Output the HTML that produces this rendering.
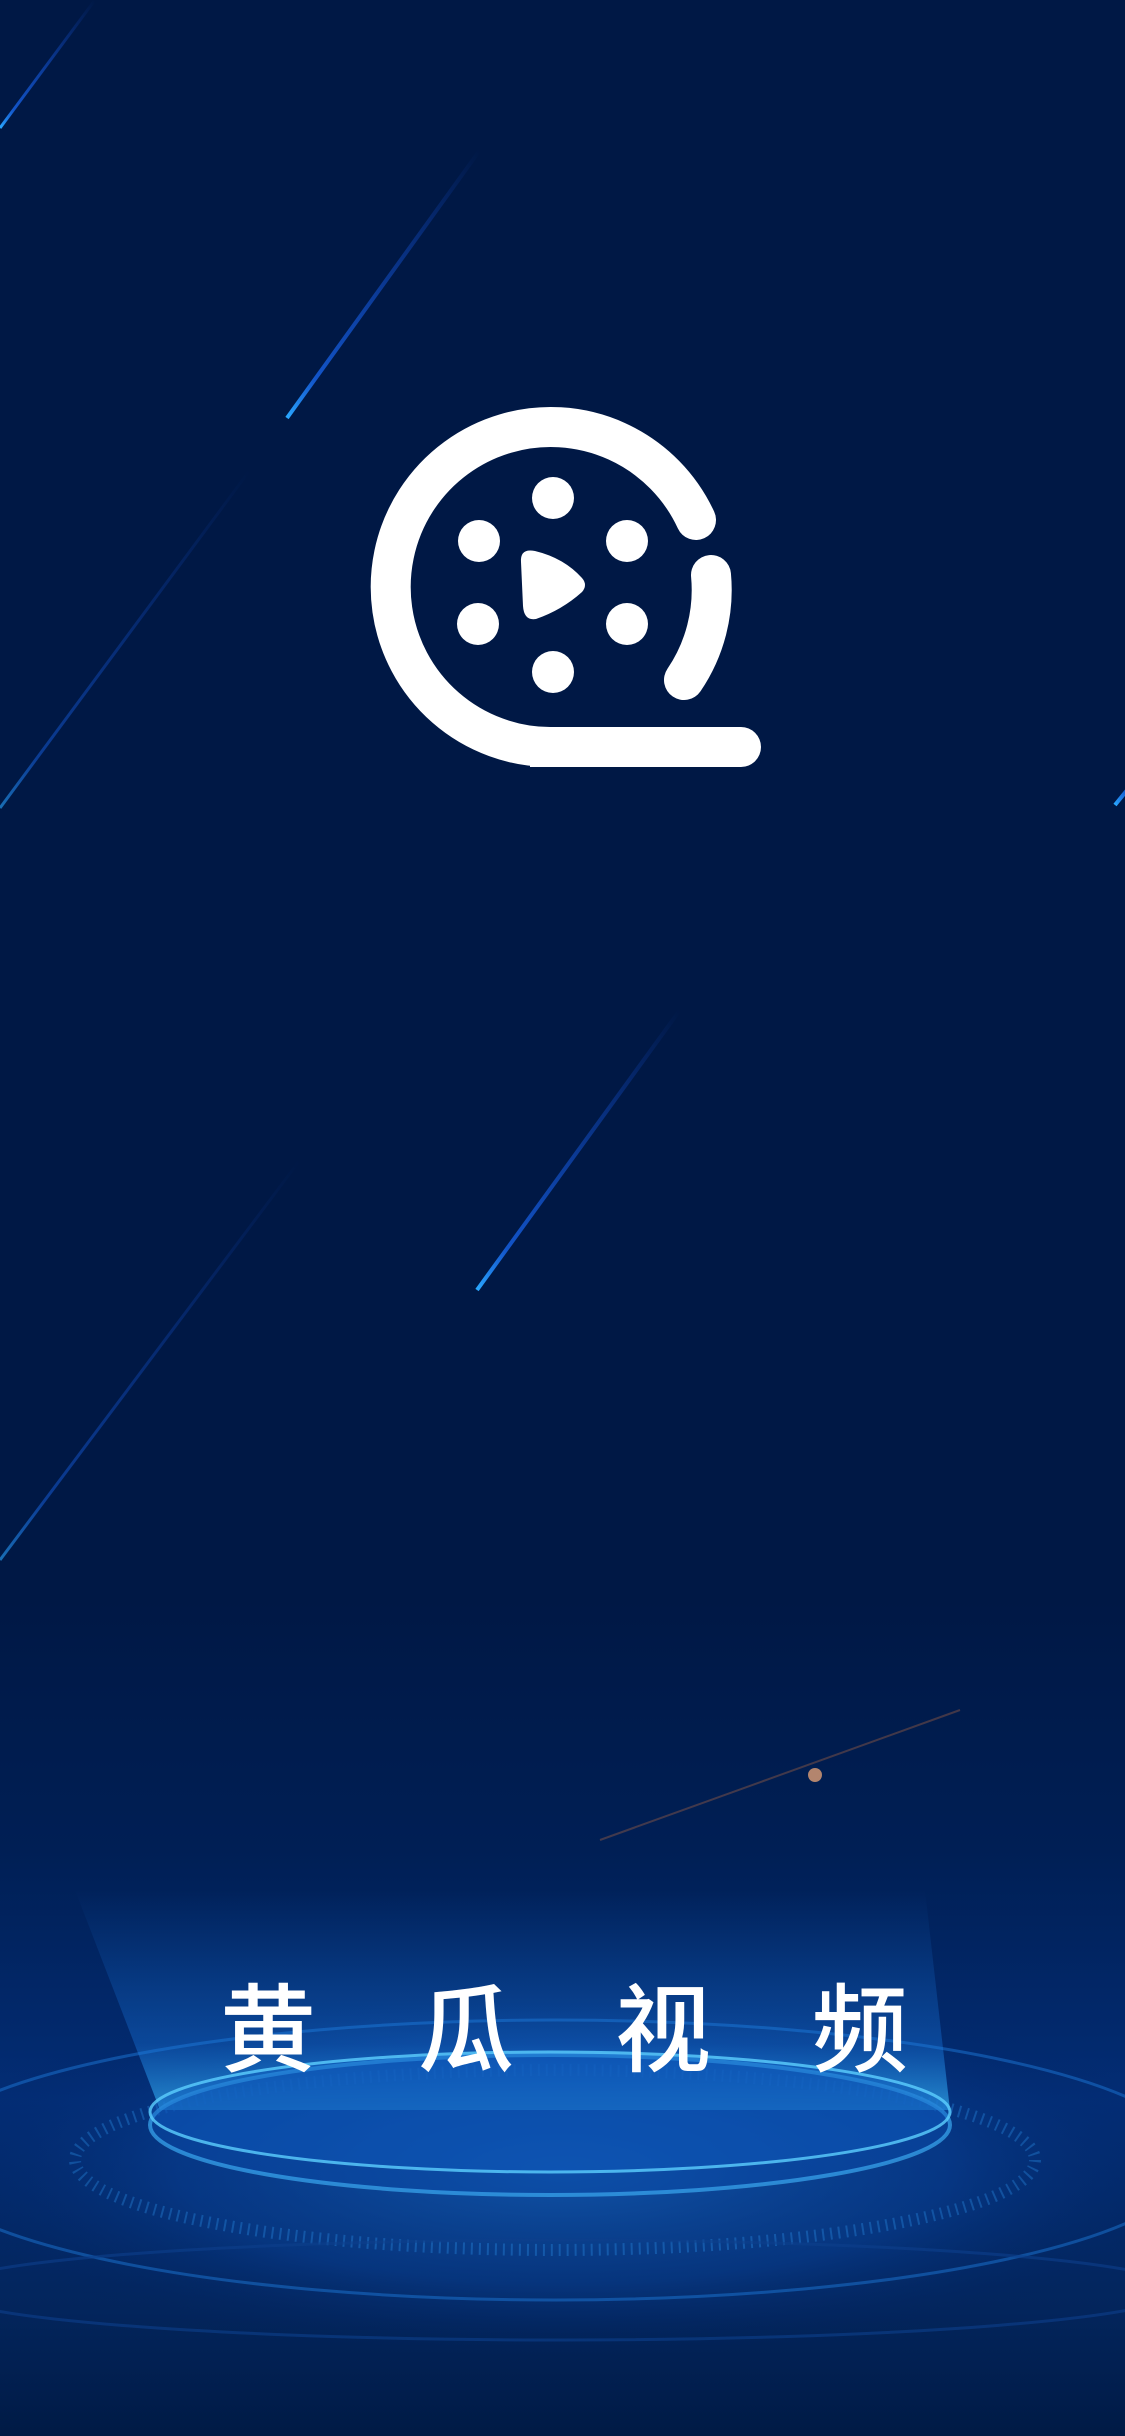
<!DOCTYPE html>
<html><head><meta charset="utf-8"><style>
html,body{margin:0;padding:0}
body{width:1125px;height:2436px;position:relative;overflow:hidden;background:#001845;font-family:"Liberation Sans","Noto Sans CJK SC",sans-serif}
.bg{position:absolute;left:0;top:0}
.t{position:absolute;top:1968px;color:#fff;font-size:96px;line-height:110px;font-family:"Noto Sans CJK SC","WenQuanYi Zen Hei",sans-serif;font-weight:500}
</style></head><body>
<svg class="bg" width="1125" height="2436" viewBox="0 0 1125 2436">
<defs>
<linearGradient id="st" x1="0" y1="1" x2="1" y2="0">
<stop offset="0" stop-color="#2aa8ff" stop-opacity="1"/><stop offset="0.15" stop-color="#1a6dff" stop-opacity="0.7"/><stop offset="1" stop-color="#1a5cff" stop-opacity="0"/></linearGradient>
<radialGradient id="glow" cx="0.5" cy="0.5" r="0.5">
<stop offset="0" stop-color="#1a6fd0" stop-opacity="0.6"/><stop offset="0.6" stop-color="#0b4aa8" stop-opacity="0.4"/><stop offset="1" stop-color="#002060" stop-opacity="0"/></radialGradient>
<linearGradient id="bot" x1="0" y1="0" x2="0" y2="1">
<stop offset="0" stop-color="#001845"/><stop offset="0.3" stop-color="#001f55"/><stop offset="0.6" stop-color="#032d75"/><stop offset="0.85" stop-color="#03255c"/><stop offset="1" stop-color="#001a45"/></linearGradient>
<linearGradient id="cyl" x1="0" y1="0" x2="0" y2="1">
<stop offset="0" stop-color="#1e8cff" stop-opacity="0"/><stop offset="0.7" stop-color="#1e8cff" stop-opacity="0.3"/><stop offset="1" stop-color="#3cc4ff" stop-opacity="0.6"/></linearGradient>
</defs>
<rect x="0" y="1600" width="1125" height="836" fill="url(#bot)"/>
<ellipse cx="562" cy="2170" rx="640" ry="190" fill="url(#glow)"/>
<path d="M75 1890 L925 1890 L950 2110 L160 2110 Z" fill="url(#cyl)"/>
<ellipse cx="555" cy="2160" rx="640" ry="140" fill="none" stroke="#1f7fe0" stroke-opacity="0.45" stroke-width="3"/>
<ellipse cx="555" cy="2160" rx="480" ry="90" fill="none" stroke="#2a8fe8" stroke-opacity="0.35" stroke-width="12" stroke-dasharray="2 6"/>
<ellipse cx="550" cy="2125" rx="400" ry="70" fill="#0a4aa8" fill-opacity="0.5" stroke="#3aa8f0" stroke-opacity="0.7" stroke-width="4"/>
<ellipse cx="550" cy="2112" rx="400" ry="60" fill="#0e5cc0" fill-opacity="0.4" stroke="#5cd0ff" stroke-opacity="0.8" stroke-width="3"/>
<ellipse cx="560" cy="2290" rx="620" ry="50" fill="none" stroke="#0e3f8c" stroke-width="3" stroke-opacity="0.6"/>
<circle cx="815" cy="1775" r="7" fill="#ffb27a" fill-opacity="0.7"/>
<line x1="600" y1="1840" x2="960" y2="1710" stroke="#d97a40" stroke-opacity="0.3" stroke-width="2"/>
<line x1="0" y1="128" x2="95" y2="0" stroke="url(#st)" stroke-width="3"/>
<line x1="287" y1="418" x2="480" y2="150" stroke="url(#st)" stroke-width="4"/>
<line x1="0" y1="808" x2="250" y2="470" stroke="url(#st)" stroke-width="3" stroke-opacity="0.6"/>
<line x1="477" y1="1290" x2="680" y2="1010" stroke="url(#st)" stroke-width="4"/>
<line x1="0" y1="1560" x2="300" y2="1160" stroke="url(#st)" stroke-width="3" stroke-opacity="0.6"/>
<line x1="1115" y1="805" x2="1200" y2="700" stroke="url(#st)" stroke-width="4"/>
<g fill="none" stroke="#fff" stroke-width="40" stroke-linecap="round">
<path d="M550 747 A160 160 0 1 1 696 520"/>
<path d="M711 575 A160 160 0 0 1 684 680"/>
<line x1="550" y1="747" x2="741" y2="747"/>
</g>
<rect x="530" y="727" width="30" height="40" fill="#fff"/>
<g fill="#fff">
<circle cx="553" cy="498" r="21"/><circle cx="479" cy="541" r="21"/><circle cx="627" cy="541" r="21"/>
<circle cx="478" cy="624" r="21"/><circle cx="627" cy="624" r="21"/><circle cx="553" cy="672" r="21"/>
<path d="M521 562 Q520 548 535 551 Q564 558 582 578 Q588 585 582 592 Q562 610 536 619 Q524 621 523 606 Z"/>
</g>
</svg>
<div class="t" style="left:220px">黄</div>
<div class="t" style="left:418px">瓜</div>
<div class="t" style="left:615px">视</div>
<div class="t" style="left:812px">频</div>
</body></html>
